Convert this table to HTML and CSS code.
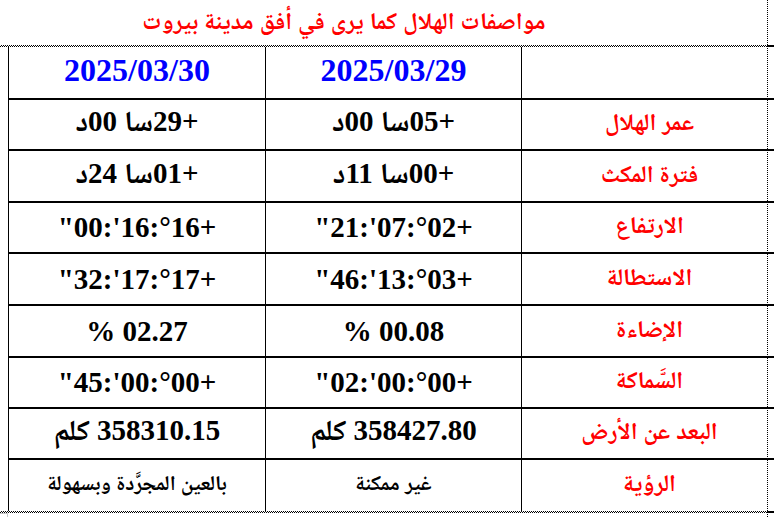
FILE: index.html
```html
<!DOCTYPE html>
<html lang="ar">
<head>
<meta charset="utf-8">
<title>مواصفات الهلال</title>
<link rel="stylesheet" href="styles.css">
</head>
<body>
<div class="page">
  <h1 class="title" dir="rtl">مواصفات الهلال كما يرى في أفق مدينة بيروت</h1>
  <div class="hatch"></div>
  <div class="grid" dir="rtl">
    <div class="cell head"></div>
    <div class="cell head date">2025/03/29</div>
    <div class="cell head date">2025/03/30</div>

    <div class="cell label">عمر الهلال</div>
    <div class="cell val">+05سا 00د</div>
    <div class="cell val">+29سا 00د</div>

    <div class="cell label">فترة المكث</div>
    <div class="cell val">+00سا 11د</div>
    <div class="cell val">+01سا 24د</div>

    <div class="cell label">الارتفاع</div>
    <div class="cell val" dir="ltr">"21:'07:°02+</div>
    <div class="cell val" dir="ltr">"00:'16:°16+</div>

    <div class="cell label">الاستطالة</div>
    <div class="cell val" dir="ltr">"46:'13:°03+</div>
    <div class="cell val" dir="ltr">"32:'17:°17+</div>

    <div class="cell label">الإضاءة</div>
    <div class="cell val">00.08 %</div>
    <div class="cell val">02.27 %</div>

    <div class="cell label">السَّماكة</div>
    <div class="cell val" dir="ltr">"02:'00:°00+</div>
    <div class="cell val" dir="ltr">"45:'00:°00+</div>

    <div class="cell label">البعد عن الأرض</div>
    <div class="cell val">358427.80 كلم</div>
    <div class="cell val">358310.15 كلم</div>

    <div class="cell label last">الرؤية</div>
    <div class="cell txt last">غير ممكنة</div>
    <div class="cell txt last">بالعين المجرَّدة وبسهولة</div>
  </div>
  <div class="hatch"></div>
  <div class="corner"></div>
  <div class="boundary"></div>
</div>
</body>
</html>
```
FILE: styles.css
```css
html, body {
  margin: 0;
  padding: 0;
  background: #fff;
}
.page {
  position: relative;
  width: 774px;
  height: 517px;
  overflow: hidden;
  font-family: "Liberation Serif", "Noto Naskh Arabic", "DejaVu Sans", serif;
}
.title {
  margin: 0;
  height: 45px;
  box-sizing: border-box;
  padding: 4px 86px 0 0;
  text-align: center;
  color: #ff0000;
  font-size: 24px;
  line-height: 34px;
  font-weight: bold;
}
.hatch {
  height: 2px;
  width: 774px;
  background:
    linear-gradient(to right, transparent 767px, #000 767px),
    repeating-conic-gradient(#000 0 25%, #fff 0 50%) 0 0 / 2px 2px;
}
.grid {
  margin-left: 8px;
  width: 769px;
  display: grid;
  grid-template-columns: 256px 256px 257px;
  grid-template-rows: 53px 51px 52px 51px 52px 52px 51px 51px 51px;
}
.cell {
  box-sizing: border-box;
  border-bottom: 2px solid #000;
  border-left: 1px solid #000;
  display: flex;
  align-items: center;
  justify-content: center;
  text-align: center;
  white-space: nowrap;
  font-weight: bold;
  color: #000;
}
.cell.last {
  border-bottom: 0;
}
.date {
  color: #0000ff;
  font-size: 32px;
  padding-bottom: 4px;
}
.label {
  color: #ff0000;
  font-size: 24px;
}
.val {
  font-size: 29px;
}
.txt {
  font-size: 21px;
}
.corner {
  position: absolute;
  left: 0;
  top: 513px;
  width: 7px;
  height: 4px;
  border-top: 1px solid #c8c8c8;
  border-right: 1px solid #c8c8c8;
}
.boundary {
  position: absolute;
  left: 767px;
  top: 0;
  width: 1px;
  height: 517px;
  background: repeating-linear-gradient(to bottom, #000 0 1px, transparent 1px 2px);
}
```
